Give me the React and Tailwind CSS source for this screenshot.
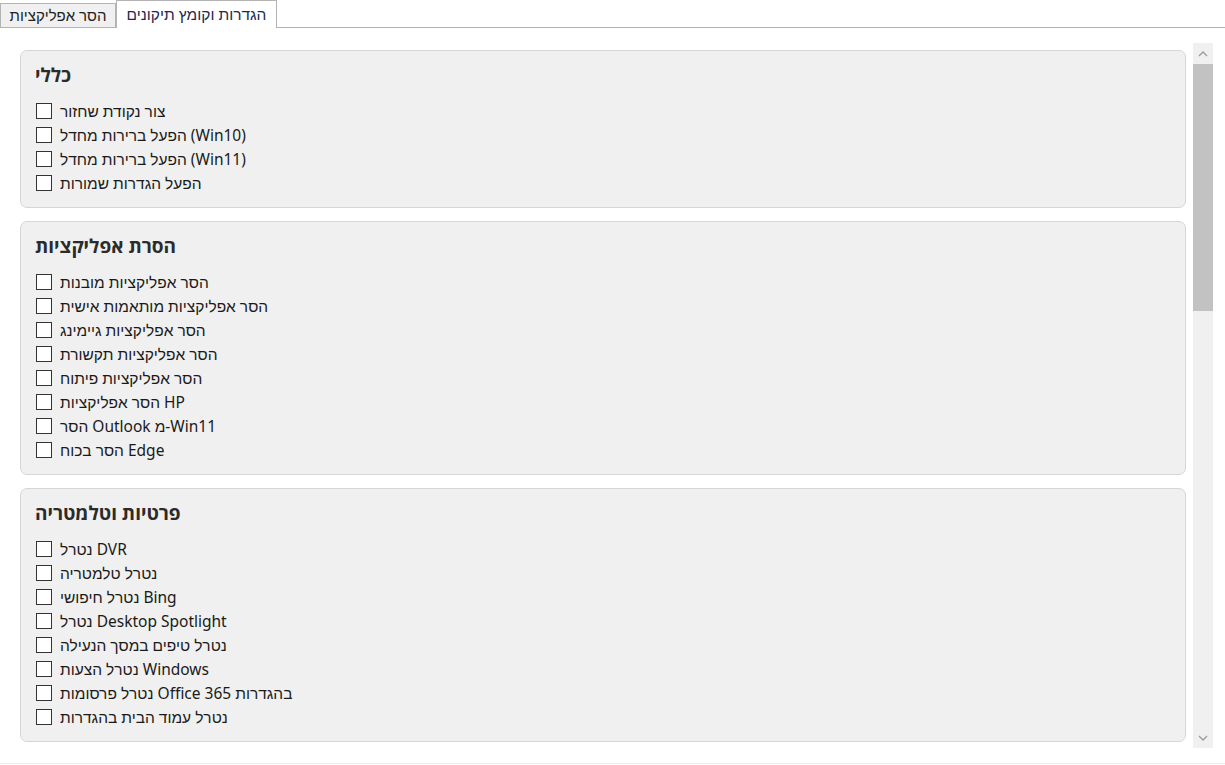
import React from "react";

const sections = [
  {
    title: "כללי",
    items: [
      "צור נקודת שחזור",
      "הפעל ברירות מחדל (Win10)",
      "הפעל ברירות מחדל (Win11)",
      "הפעל הגדרות שמורות",
    ],
  },
  {
    title: "הסרת אפליקציות",
    items: [
      "הסר אפליקציות מובנות",
      "הסר אפליקציות מותאמות אישית",
      "הסר אפליקציות גיימינג",
      "הסר אפליקציות תקשורת",
      "הסר אפליקציות פיתוח",
      "הסר אפליקציות HP",
      "הסר Outlook מ-Win11",
      "הסר בכוח Edge",
    ],
  },
  {
    title: "פרטיות וטלמטריה",
    items: [
      "נטרל DVR",
      "נטרל טלמטריה",
      "נטרל חיפושי Bing",
      "נטרל Desktop Spotlight",
      "נטרל טיפים במסך הנעילה",
      "נטרל הצעות Windows",
      "נטרל פרסומות Office 365 בהגדרות",
      "נטרל עמוד הבית בהגדרות",
    ],
  },
];

const itemFont = { fontFamily: '"Noto Sans", "Liberation Sans", "DejaVu Sans", sans-serif' };

function Section({ title, items }) {
  return (
    <div className="rounded-[7px] border border-[#d6d6d6] bg-[#f0f0f0] pt-[13px] pb-[12px] pl-[14px]">
      <div
        className="h-[22px] leading-[22px] text-[19px] font-bold text-[#2b2b2b] mb-[13px]"
        style={{ fontFamily: '"Open Sans", "Noto Sans", sans-serif' }}
      >
        {title}
      </div>
      <div className="flex flex-col">
        {items.map((t) => (
          <label key={t} className="flex h-[24px] items-center gap-[8px] pl-[1px]">
            <span className="block h-[16px] w-[16px] shrink-0 border border-[#333333] bg-white" />
            <span dir="ltr" className="text-[15.5px] text-[#1a1a1a] leading-[24px]" style={itemFont}>
              {t}
            </span>
          </label>
        ))}
      </div>
    </div>
  );
}

export default function App() {
  return (
    <div
      className="relative h-[765px] w-[1225px] overflow-hidden bg-white"
      style={{ fontFamily: '"Noto Sans", "Liberation Sans", sans-serif' }}
    >
      {/* Tabs */}
      <div className="flex h-[28px] items-end border-b border-[#b4b4b4]">
        <div className="flex h-[24px] w-[116px] items-center justify-center border border-b-0 border-[#b4b4b4] bg-[#f0f0f0] text-[15px] text-[#222]">
          הסר אפליקציות
        </div>
        <div className="-mb-px flex h-[28px] w-[161px] items-center justify-center border border-b-0 border-[#b4b4b4] bg-white text-[15.5px] text-[#1c2a52]">
          הגדרות וקומץ תיקונים
        </div>
      </div>

      {/* Content */}
      <div className="flex pl-[20px] pr-[12px] pt-[15px]">
        <div className="flex flex-1 flex-col gap-[13px] pt-[7px]">
          {sections.map((s) => (
            <Section key={s.title} {...s} />
          ))}
        </div>
        <div className="ml-[7px] flex h-[705px] w-[20px] flex-col bg-[#f0f0f0]">
          <div className="flex h-[21px] items-center justify-center">
            <svg width="10" height="6" viewBox="0 0 10 6">
              <path d="M1 5 L5 1 L9 5" fill="none" stroke="#9a9a9a" strokeWidth="1.3" />
            </svg>
          </div>
          <div className="mx-0 h-[247px] bg-[#c2c2c2]" />
          <div className="flex-1" />
          <div className="flex h-[20px] items-center justify-center">
            <svg width="10" height="6" viewBox="0 0 10 6">
              <path d="M1 1 L5 5 L9 1" fill="none" stroke="#9a9a9a" strokeWidth="1.3" />
            </svg>
          </div>
        </div>
      </div>
      <div className="absolute bottom-[1px] left-0 h-px w-full bg-[#ececec]" />
    </div>
  );
}
